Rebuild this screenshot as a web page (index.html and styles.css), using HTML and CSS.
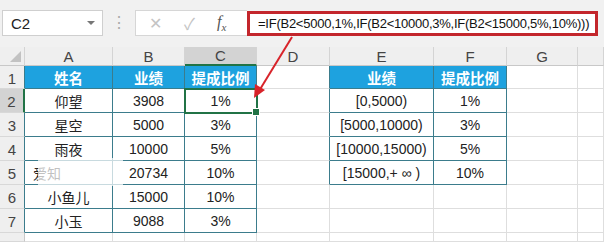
FILE: index.html
```html
<!DOCTYPE html>
<html lang="zh-CN">
<head>
  <meta charset="UTF-8" />
  <title>提成比例</title>
  <link rel="stylesheet" href="styles.css">
</head>
<body>
  <div class="toolbar">
    <div class="name-box">
      <span>C2</span>
      <span class="caret"></span>
    </div>
    <div class="dots">⋮</div>
    <div class="fx-buttons">
      <span class="fx-btn">✕</span>
      <span class="fx-btn">✓</span>
      <span class="fx-btn fx">f<sub>x</sub></span>
    </div>
    <div class="formula">=IF(B2&lt;5000,1%,IF(B2&lt;10000,3%,IF(B2&lt;15000,5%,10%)))</div>
  </div>

  <div class="sheet">
    <!-- column headers -->
    <div class="ch corner"><span class="tri"></span></div>
    <div class="ch">A</div>
    <div class="ch">B</div>
    <div class="ch active">C</div>
    <div class="ch">D</div>
    <div class="ch">E</div>
    <div class="ch">F</div>
    <div class="ch">G</div>
    <div class="ch"></div>

    <!-- row 1 -->
    <div class="rh edge">1</div>
    <div class="c d hd">姓名</div>
    <div class="c d hd">业绩</div>
    <div class="c d hd">提成比例</div>
    <div class="c edge"></div>
    <div class="c d hd">业绩</div>
    <div class="c d hd">提成比例</div>
    <div class="c"></div>
    <div class="c"></div>

    <!-- row 2 -->
    <div class="rh edge sel">2</div>
    <div class="c d">仰望</div>
    <div class="c d">3908</div>
    <div class="c d pick">1%</div>
    <div class="c edge"></div>
    <div class="c d">[0,5000)</div>
    <div class="c d">1%</div>
    <div class="c"></div>
    <div class="c"></div>

    <!-- row 3 -->
    <div class="rh edge">3</div>
    <div class="c d">星空</div>
    <div class="c d">5000</div>
    <div class="c d">3%</div>
    <div class="c edge"></div>
    <div class="c d">[5000,10000)</div>
    <div class="c d">3%</div>
    <div class="c"></div>
    <div class="c"></div>

    <!-- row 4 -->
    <div class="rh edge">4</div>
    <div class="c d">雨夜</div>
    <div class="c d">10000</div>
    <div class="c d">5%</div>
    <div class="c edge"></div>
    <div class="c d">[10000,15000)</div>
    <div class="c d">5%</div>
    <div class="c"></div>
    <div class="c"></div>

    <!-- row 5 -->
    <div class="rh edge">5</div>
    <div class="c d left">爱知</div>
    <div class="c d">20734</div>
    <div class="c d">10%</div>
    <div class="c edge"></div>
    <div class="c d">[15000,+ ∞ )</div>
    <div class="c d">10%</div>
    <div class="c"></div>
    <div class="c"></div>

    <!-- row 6 -->
    <div class="rh edge">6</div>
    <div class="c d">小鱼儿</div>
    <div class="c d">15000</div>
    <div class="c d">10%</div>
    <div class="c"></div>
    <div class="c"></div>
    <div class="c"></div>
    <div class="c"></div>
    <div class="c"></div>

    <!-- row 7 -->
    <div class="rh edge">7</div>
    <div class="c d">小玉</div>
    <div class="c d">9088</div>
    <div class="c d">3%</div>
    <div class="c"></div>
    <div class="c"></div>
    <div class="c"></div>
    <div class="c"></div>
    <div class="c"></div>

    <!-- row 8, cut off by the window -->
    <div class="rh"></div>
    <div class="c"></div>
    <div class="c"></div>
    <div class="c"></div>
    <div class="c"></div>
    <div class="c"></div>
    <div class="c"></div>
    <div class="c"></div>
    <div class="c"></div>
  </div>

  <!-- faded watermark patch over A5 -->
  <div class="patch"></div>

  <svg class="arrow" width="604" height="242" viewBox="0 0 604 242">
    <line x1="292" y1="37" x2="259" y2="91" stroke="#d8232a" stroke-width="2" />
    <polygon points="254,98 255,84 265,90" fill="#d8232a" />
  </svg>
</body>
</html>
```

FILE: styles.css
```css
body {
  margin: 0;
  width: 604px;
  height: 242px;
  overflow: hidden;
  background: #fff;
  font-family: 'Liberation Sans', 'Noto Sans CJK SC', sans-serif;
  position: relative;
}

.toolbar {
  height: 47px;
  box-sizing: border-box;
  background: #f1f1f1;
  display: flex;
  align-items: flex-start;
  padding: 10px 0 0 2px;
}

.name-box {
  width: 101px;
  height: 26px;
  box-sizing: border-box;
  background: #fff;
  border: 1px solid #cfcfcf;
  display: flex;
  align-items: center;
  justify-content: space-between;
  padding: 0 7px 0 8px;
  font-size: 15px;
  color: #222;
}

.caret {
  width: 0;
  height: 0;
  border-left: 4px solid transparent;
  border-right: 4px solid transparent;
  border-top: 4px solid #777;
}

.dots {
  width: 32px;
  text-align: center;
  color: #aaa;
  font-size: 16px;
  line-height: 26px;
}

.fx-buttons {
  width: 112px;
  height: 26px;
  box-sizing: border-box;
  background: #fff;
  border: 1px solid #d6d6d6;
  border-right: none;
  display: flex;
  align-items: center;
  gap: 22px;
  padding-left: 13px;
}

.fx-btn {
  color: #c4c4c4;
  font-size: 16px;
}

.fx {
  color: #555;
  font-family: 'Liberation Serif', serif;
  font-style: italic;
  font-size: 16px;
}

.fx sub {
  font-size: 11px;
}

.formula {
  width: 351px;
  height: 25px;
  margin-top: 1px;
  box-sizing: border-box;
  background: #fff;
  border: 3px solid #c3262c;
  font-size: 13px;
  letter-spacing: -0.25px;
  color: #111;
  line-height: 19px;
  padding-left: 8px;
  white-space: nowrap;
  overflow: hidden;
}

.sheet {
  display: grid;
  grid-template-columns: 25px 88px 72px 72px 73px 104px 73px 71px 1fr;
  grid-template-rows: 19px 23px repeat(6, 24px) 1fr;
  height: 195px;
}

.ch {
  background: #efefef;
  border-right: 1px solid #d4d4d4;
  border-bottom: 1px solid #c8c8c8;
  box-sizing: border-box;
  color: #444;
  font-size: 15px;
  display: flex;
  align-items: center;
  justify-content: center;
}

.ch.active {
  background: #d3d3d3;
  border-bottom: 2px solid #217346;
}

.corner {
  position: relative;
}

.tri {
  position: absolute;
  right: 3px;
  bottom: 3px;
  width: 0;
  height: 0;
  border-left: 11px solid transparent;
  border-bottom: 11px solid #c2c2c2;
}

.rh {
  background: #efefef;
  border-right: 1px solid #c8c8c8;
  border-bottom: 1px solid #d8d8d8;
  box-sizing: border-box;
  color: #444;
  font-size: 15px;
  display: flex;
  align-items: center;
  justify-content: center;
  padding-top: 2px;
}

.rh.edge {
  border-right-color: #3b7c8c;
}

.rh.sel {
  background: #d3d3d3;
  border-right: 2px solid #217346;
}

.c {
  border-right: 1px solid #dedede;
  border-bottom: 1px solid #dedede;
  box-sizing: border-box;
  font-size: 14px;
  color: #222;
  display: flex;
  align-items: center;
  justify-content: center;
  white-space: nowrap;
}

.c.edge {
  border-right-color: #3b7c8c;
}

.c.d {
  border-right-color: #3b7c8c;
  border-bottom-color: #3b7c8c;
}

.c.hd {
  background: #1ea2df;
  color: #fff;
  font-weight: bold;
  font-size: 14.5px;
}

.c.left {
  justify-content: flex-start;
  padding-left: 8px;
}

.c.pick {
  position: relative;
  outline: 2px solid #217346;
  outline-offset: -1px;
}

.c.pick::after {
  content: '';
  position: absolute;
  right: -4px;
  bottom: -4px;
  width: 6px;
  height: 6px;
  background: #217346;
  border: 1px solid #fff;
}

.patch {
  position: absolute;
  left: 38px;
  top: 158px;
  width: 85px;
  height: 28px;
  background: rgba(255, 255, 255, 0.72);
}

.arrow {
  position: absolute;
  left: 0;
  top: 0;
  pointer-events: none;
}
```
